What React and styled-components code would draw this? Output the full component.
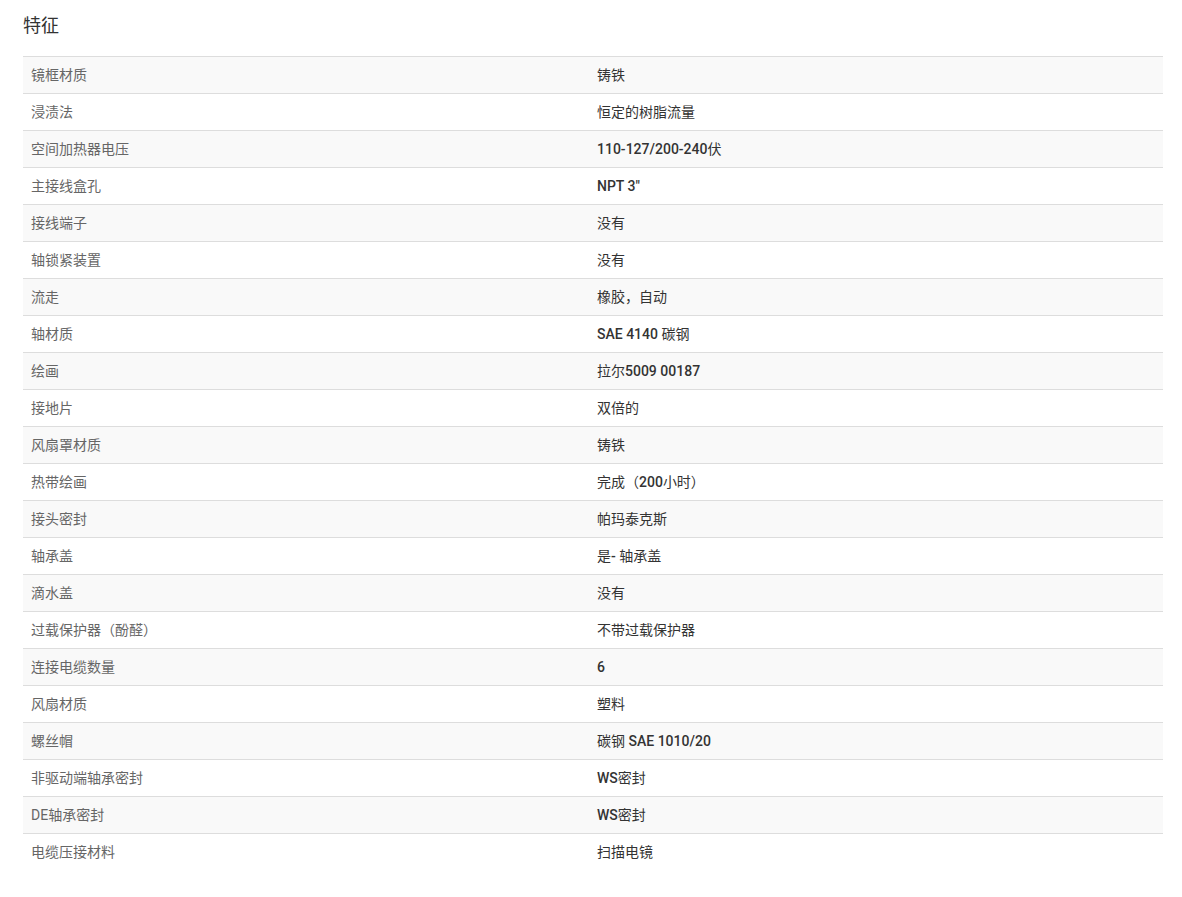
import styled, { createGlobalStyle } from "styled-components";

const GlobalStyle = createGlobalStyle`
  body {
    margin: 0;
    background: #fff;
    font-family: Roboto, "Noto Sans CJK SC", sans-serif;
  }
`;

const Wrapper = styled.div`
  padding: 13px 19px 0 23px;
  width: 1140px;
`;

const Title = styled.h3`
  margin: 0 0 17px;
  font-size: 18px;
  font-weight: 400;
  line-height: 26px;
  color: #333;
`;

const Table = styled.table`
  width: 100%;
  border-collapse: collapse;
  font-size: 14px;
  line-height: 20px;
`;

const Row = styled.tr`
  background: ${props => (props.striped ? "#f9f9f9" : "#fff")};
  border-top: 1px solid #ddd;
`;

const Label = styled.td`
  width: 550px;
  padding: 8px;
  color: #666;
`;

const Value = styled.td`
  padding: 8px;
  color: #333;
  font-weight: 500;
`;

// CJK glyphs in the values are drawn at regular weight, latin at medium
const Han = styled.span`
  font-weight: 400;
`;

const specs = [
  ["镜框材质", "铸铁"],
  ["浸渍法", "恒定的树脂流量"],
  ["空间加热器电压", "110-127/200-240伏"],
  ["主接线盒孔", "NPT 3\""],
  ["接线端子", "没有"],
  ["轴锁紧装置", "没有"],
  ["流走", "橡胶，自动"],
  ["轴材质", "SAE 4140 碳钢"],
  ["绘画", "拉尔5009 00187"],
  ["接地片", "双倍的"],
  ["风扇罩材质", "铸铁"],
  ["热带绘画", "完成（200小时）"],
  ["接头密封", "帕玛泰克斯"],
  ["轴承盖", "是- 轴承盖"],
  ["滴水盖", "没有"],
  ["过载保护器（酚醛）", "不带过载保护器"],
  ["连接电缆数量", "6"],
  ["风扇材质", "塑料"],
  ["螺丝帽", "碳钢 SAE 1010/20"],
  ["非驱动端轴承密封", "WS密封"],
  ["DE轴承密封", "WS密封"],
  ["电缆压接材料", "扫描电镜"],
];

function splitHan(text) {
  return text.split(/([\u3000-\u9fff\uff00-\uffef]+)/).filter(Boolean).map((part, i) =>
    /[\u3000-\u9fff\uff00-\uffef]/.test(part) ? <Han key={i}>{part}</Han> : part
  );
}

export default function App() {
  return (
    <>
      <GlobalStyle />
      <Wrapper>
        <Title>特征</Title>
        <Table>
          <tbody>
            {specs.map(([label, value], i) => (
              <Row key={label} striped={i % 2 === 0}>
                <Label>{label}</Label>
                <Value>{splitHan(value)}</Value>
              </Row>
            ))}
          </tbody>
        </Table>
      </Wrapper>
    </>
  );
}
